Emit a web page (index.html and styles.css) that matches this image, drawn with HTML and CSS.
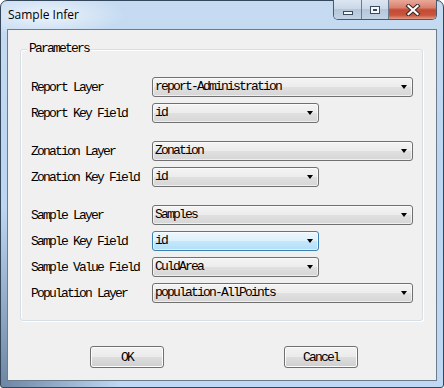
FILE: index.html
```html
<!DOCTYPE html>
<html>
<head>
<meta charset="utf-8">
<link rel="stylesheet" href="styles.css">
</head>
<body>
<div class="window">
  <div class="titlebar">
    <span class="title">Sample Infer</span>
    <div class="caption">
      <div class="cbtn min"><span class="g-min"></span></div>
      <div class="cbtn max"><span class="g-max"></span></div>
      <div class="cbtn close">
        <svg width="16" height="12" viewBox="0 0 16 12">
          <path d="M3.5 2 L12.5 10 M12.5 2 L3.5 10" stroke="#3a2a2a" stroke-width="4.2" stroke-linecap="square"/>
          <path d="M3.5 2 L12.5 10 M12.5 2 L3.5 10" stroke="#ffffff" stroke-width="2.2" stroke-linecap="square"/>
        </svg>
      </div>
    </div>
  </div>
  <div class="client">
    <div class="group">
      <span class="group-title">Parameters</span>
      <div class="section first">
        <div class="row"><span class="label">Report Layer</span><div class="combo wide"><span class="val">report-Administration</span><span class="arrow"></span></div></div>
        <div class="row"><span class="label">Report Key Field</span><div class="combo narrow"><span class="val">id</span><span class="arrow"></span></div></div>
      </div>
      <div class="section">
        <div class="row"><span class="label">Zonation Layer</span><div class="combo wide"><span class="val">Zonation</span><span class="arrow"></span></div></div>
        <div class="row"><span class="label">Zonation Key Field</span><div class="combo narrow"><span class="val">id</span><span class="arrow"></span></div></div>
      </div>
      <div class="section">
        <div class="row"><span class="label">Sample Layer</span><div class="combo wide"><span class="val">Samples</span><span class="arrow"></span></div></div>
        <div class="row"><span class="label">Sample Key Field</span><div class="combo narrow focus"><span class="val">id</span><span class="arrow"></span></div></div>
        <div class="row"><span class="label">Sample Value Field</span><div class="combo narrow"><span class="val">CuldArea</span><span class="arrow"></span></div></div>
        <div class="row"><span class="label">Population Layer</span><div class="combo wide"><span class="val">population-AllPoints</span><span class="arrow"></span></div></div>
      </div>
    </div>
    <div class="buttons">
      <div class="btn">OK</div>
      <div class="btn">Cancel</div>
    </div>
  </div>
</div>
</body>
</html>
```
FILE: styles.css
```css
* { box-sizing: border-box; }
html, body { margin: 0; padding: 0; background: #ffffff; }
body { width: 444px; height: 388px; overflow: hidden; }

.window {
  width: 444px;
  height: 388px;
  border: 1px solid #34465a;
  border-radius: 7px 7px 3px 3px;
  padding: 0 6px 6px 6px;
  display: flex;
  flex-direction: column;
  background:
    radial-gradient(ellipse 120px 180px at 0 100%, rgba(80,105,135,0.75), rgba(80,105,135,0) 100%),
    radial-gradient(ellipse 80px 22px at 45px 14px, rgba(240,246,252,0.9), rgba(240,246,252,0) 100%),
    linear-gradient(180deg, #c6dbf1 0%, #bcd6f1 40%, #bfd9f4 100%);
}

.titlebar {
  height: 28px;
  display: flex;
  align-items: flex-start;
  justify-content: space-between;
}
.title {
  font-family: "Open Sans", "Noto Sans", sans-serif;
  font-size: 12px;
  line-height: 16px;
  padding: 6px 0 0 1px;
  color: #000;
}
.caption {
  display: flex;
  margin-top: -1px;
  height: 20px;
  border: 1px solid #4a5a6e;
  border-top: none;
  border-radius: 0 0 5px 5px;
  overflow: hidden;
}
.cbtn {
  height: 100%;
  display: flex;
  align-items: center;
  justify-content: center;
}
.cbtn.min, .cbtn.max {
  background: linear-gradient(180deg, #dbe6f2 0%, #cbd8e7 45%, #b5c6da 50%, #c2d3e6 100%);
  border-right: 1px solid #6a7b90;
}
.cbtn.min { width: 28px; }
.cbtn.max { width: 27px; }
.cbtn.close {
  width: 47px;
  background: linear-gradient(180deg, #e9a898 0%, #d98170 40%, #c44a33 52%, #c9553f 80%, #e49a86 100%);
}
.g-min {
  width: 10px; height: 4px;
  margin-top: 6px;
  background: #f4f8fc;
  border: 1px solid #3b4a5c;
}
.g-max {
  width: 10px; height: 8px;
  border: 1px solid #3b4a5c;
  background: #f4f8fc;
  box-shadow: inset 0 0 0 2px #f4f8fc, inset 0 0 0 3px #3b4a5c;
}

.client {
  height: 352px;
  border: 1px solid #6d7c8c;
  background: #f0f0f0;
  display: flex;
  flex-direction: column;
}

.group {
  width: 403px;
  margin: 19px 0 0 12px;
  border: 1px solid #d5dfe5;
  border-radius: 3px;
  box-shadow: inset 1px 1px 0 #ffffff, 1px 1px 0 #ffffff;
  padding: 0 0 17px 10px;
  display: flex;
  flex-direction: column;
}
.group-title {
  align-self: flex-start;
  margin: -7px 0 0 -4px;
  padding: 0 2px;
  background: #f0f0f0;
  font-family: "Liberation Mono", monospace;
  font-size: 13px;
  letter-spacing: -1.8px;
  line-height: 12px;
  color: #000;
}

.section {
  display: flex;
  flex-direction: column;
  gap: 6px;
  margin-top: 18px;
}
.section.first { margin-top: 22px; }

.row {
  display: flex;
  align-items: center;
  height: 20px;
}
.label, .val, .btn {
  font-family: "Liberation Mono", monospace;
  font-size: 13px;
  letter-spacing: -1.8px;
  color: #000;
  white-space: nowrap;
}
.label { width: 121px; }

.combo {
  height: 20px;
  border: 1px solid #707070;
  border-radius: 3px;
  background: linear-gradient(180deg, #f4f4f4 0%, #ececec 50%, #e0e0e0 51%, #d6d6d6 100%);
  box-shadow: inset 0 0 0 1px rgba(255,255,255,0.6);
  display: flex;
  align-items: center;
  justify-content: space-between;
  padding: 0 5px 0 2px;
}
.combo.wide { width: 261px; }
.combo.narrow { width: 167px; }
.combo.focus {
  border-color: #3c7fb1;
  background: linear-gradient(180deg, #ecf7fd 0%, #ddf1fc 50%, #c4e8fd 51%, #b2def7 100%);
}
.val { line-height: 14px; }
.arrow {
  width: 0; height: 0;
  border-left: 3.5px solid transparent;
  border-right: 3.5px solid transparent;
  border-top: 4px solid #000;
}

.buttons {
  display: flex;
  margin: 25px 0 0 82px;
  gap: 120px;
}
.btn {
  width: 74px;
  height: 22px;
  border: 1px solid #707070;
  border-radius: 3px;
  background: linear-gradient(180deg, #f2f2f2 0%, #ebebeb 50%, #dddddd 51%, #cfcfcf 100%);
  box-shadow: inset 0 0 0 1px #fcfcfc;
  display: flex;
  align-items: center;
  justify-content: center;
}
```
